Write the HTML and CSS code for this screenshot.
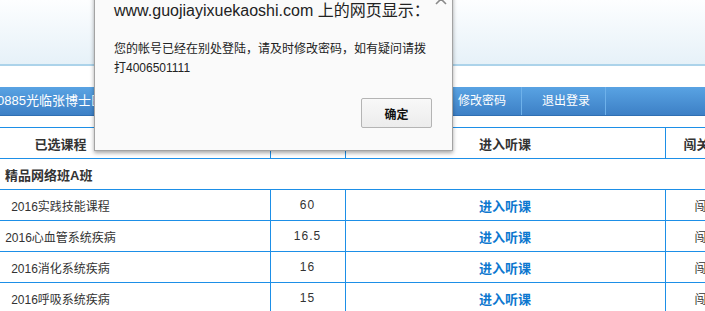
FILE: index.html
```html
<!DOCTYPE html>
<html>
<head>
<meta charset="utf-8">
<link rel="stylesheet" href="styles.css">
</head>
<body>
<div class="page">
  <div class="header"></div>
  <div class="navbar">
    <div class="welcome">0885光临张博士医学教育网</div>
    <div class="nav-item">修改密码</div>
    <div class="nav-item">退出登录</div>
  </div>
  <table class="courses">
    <colgroup>
      <col class="c1"><col class="c2"><col class="c3"><col class="c4">
    </colgroup>
    <tr class="head">
      <th><div class="name">已选课程</div></th>
      <th>学时</th>
      <th>进入听课</th>
      <th class="last">闯关练习</th>
    </tr>
    <tr>
      <td colspan="4" class="cat">精品网络班A班</td>
    </tr>
    <tr>
      <td><div class="name">2016实践技能课程</div></td>
      <td class="num">60</td>
      <td class="go"><a>进入听课</a></td>
      <td class="last">闯关练习</td>
    </tr>
    <tr>
      <td><div class="name">2016心血管系统疾病</div></td>
      <td class="num">16.5</td>
      <td class="go"><a>进入听课</a></td>
      <td class="last">闯关练习</td>
    </tr>
    <tr>
      <td><div class="name">2016消化系统疾病</div></td>
      <td class="num">16</td>
      <td class="go"><a>进入听课</a></td>
      <td class="last">闯关练习</td>
    </tr>
    <tr>
      <td><div class="name">2016呼吸系统疾病</div></td>
      <td class="num">15</td>
      <td class="go"><a>进入听课</a></td>
      <td class="last">闯关练习</td>
    </tr>
  </table>
</div>

<div class="dialog">
  <svg class="close" width="14" height="14" viewBox="0 0 14 14"><path d="M2 2 L12 12 M12 2 L2 12" stroke="#8a8a8a" stroke-width="1.6" fill="none"/></svg>
  <div class="d-title">www.guojiayixuekaoshi.com 上的网页显示：</div>
  <div class="d-msg">您的帐号已经在别处登陆，请及时修改密码，如有疑问请拨打4006501111</div>
  <div class="d-actions"><button class="d-btn">确定</button></div>
</div>
</body>
</html>
```

FILE: styles.css
```css
html, body {
  margin: 0;
  padding: 0;
  overflow: hidden;
  background: #ffffff;
}
body {
  width: 705px;
  height: 311px;
  font-family: "Liberation Sans", "Noto Sans CJK SC", sans-serif;
  font-size: 12px;
  color: #333333;
}
.page {
  width: 705px;
}
.header {
  height: 64px;
  background: linear-gradient(#fdfeff, #e6f1f8);
  border-bottom: 2px solid #acd3ea;
}
.navbar {
  margin-top: 21px;
  height: 28px;
  display: flex;
  align-items: stretch;
  background: linear-gradient(#59a3e3, #3d80c6);
  border-bottom: 1px solid #2f6fb3;
  color: #ffffff;
  font-size: 12px;
  line-height: 28px;
}
.welcome {
  flex: 0 0 438px;
  text-indent: -3px;
  white-space: nowrap;
  overflow: hidden;
  font-size: 13px;
}
.nav-item {
  flex: 0 0 78px;
  padding-left: 5px;
  text-align: center;
  border-right: 1px solid #6eb1ea;
  font-size: 12px;
}
.courses {
  margin-top: 11px;
  border-collapse: collapse;
  table-layout: fixed;
  width: 800px;
}
.c1 { width: 270px; }
.c2 { width: 75px; }
.c3 { width: 320px; }
.c4 { width: 135px; }
.courses th, .courses td {
  border: 1px solid #1d8fe7;
  height: 30px;
  padding: 0;
  text-align: center;
  vertical-align: middle;
  white-space: nowrap;
  overflow: hidden;
}
.courses tr > :first-child {
  border-left: none;
}
.courses th {
  font-size: 13px;
  font-weight: bold;
  color: #333333;
}
.name {
  width: 121px;
  text-align: center;
}
.courses th .name {
  font-size: 13px;
}
.courses td.cat {
  text-align: left;
  padding-left: 5px;
  font-weight: bold;
  font-size: 13px;
}
.num {
  font-size: 12px;
  letter-spacing: 1px;
}
.go a {
  color: #0d78cf;
  font-weight: bold;
  font-size: 13px;
}
.courses th.last {
  text-align: left;
  padding-left: 18px;
}
.courses td.last {
  text-align: left;
  padding-left: 29px;
}

.dialog {
  position: absolute;
  left: 94px;
  top: -10px;
  width: 318px;
  padding: 10px 20px 22px 19px;
  background: #fafafa;
  border: 1px solid #a3a3a3;
  box-shadow: 0 2px 4px rgba(0, 0, 0, 0.35);
  font-family: "Liberation Sans", "Noto Sans CJK SC", sans-serif;
}
.close {
  position: absolute;
  left: 339px;
  top: 1px;
}
.d-title {
  font-size: 16px;
  line-height: 20px;
  color: #222222;
  white-space: nowrap;
}
.d-msg {
  margin-top: 19px;
  font-size: 12px;
  line-height: 19px;
  color: #222222;
}
.d-actions {
  display: flex;
  justify-content: flex-end;
  margin-top: 20px;
}
.d-btn {
  width: 71px;
  height: 30px;
  border: 1px solid #b4b4b4;
  border-radius: 2px;
  background: linear-gradient(#f8f8f8, #ececec);
  font-family: "Noto Sans CJK SC", sans-serif;
  font-size: 12px;
  font-weight: bold;
  color: #111111;
  padding: 0;
}
```
